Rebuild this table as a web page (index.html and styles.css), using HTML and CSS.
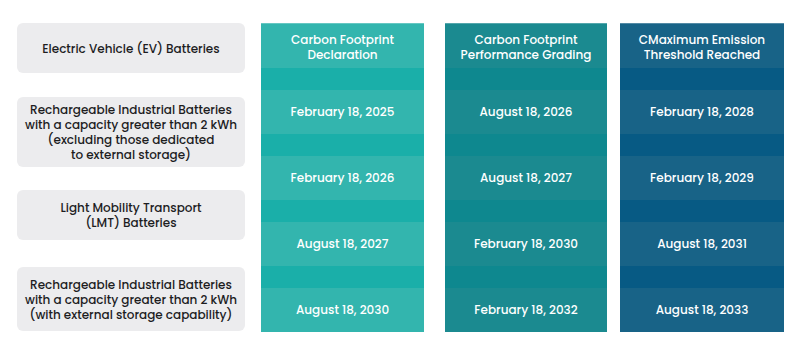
FILE: index.html
```html
<!DOCTYPE html>
<html>
<head>
<meta charset="utf-8">
<link rel="stylesheet" href="styles.css">
</head>
<body>
<div class="page">
  <div class="labels">
    <div class="label l1">Electric Vehicle (EV) Batteries</div>
    <div class="label l2">Rechargeable Industrial Batteries<br>with a capacity greater than 2 kWh<br>(excluding those dedicated<br>to external storage)</div>
    <div class="label l3">Light Mobility Transport<br>(LMT) Batteries</div>
    <div class="label l4">Rechargeable Industrial Batteries<br>with a capacity greater than 2 kWh<br>(with external storage capability)</div>
  </div>
  <div class="col c1">
    <div class="head">Carbon Footprint<br>Declaration</div>
    <div class="gap"></div><div class="cell">February 18, 2025</div>
    <div class="gap"></div><div class="cell">February 18, 2026</div>
    <div class="gap"></div><div class="cell">August 18, 2027</div>
    <div class="gap"></div><div class="cell">August 18, 2030</div>
  </div>
  <div class="col c2">
    <div class="head">Carbon Footprint<br>Performance Grading</div>
    <div class="gap"></div><div class="cell">August 18, 2026</div>
    <div class="gap"></div><div class="cell">August 18, 2027</div>
    <div class="gap"></div><div class="cell">February 18, 2030</div>
    <div class="gap"></div><div class="cell">February 18, 2032</div>
  </div>
  <div class="col c3">
    <div class="head">CMaximum Emission<br>Threshold Reached</div>
    <div class="gap"></div><div class="cell">February 18, 2028</div>
    <div class="gap"></div><div class="cell">February 18, 2029</div>
    <div class="gap"></div><div class="cell">August 18, 2031</div>
    <div class="gap"></div><div class="cell">August 18, 2033</div>
  </div>
</div>
</body>
</html>
```
FILE: styles.css
```css
html, body {
  margin: 0;
  padding: 0;
  background: #ffffff;
}
body {
  font-family: "Poppins", "Inter", "Noto Sans", sans-serif;
  font-weight: 500;
}
.page {
  display: flex;
  align-items: flex-start;
  padding: 23px 0 0 17px;
}
.labels {
  width: 228px;
  display: flex;
  flex-direction: column;
}
.label {
  background: #ececee;
  border-radius: 6px;
  color: #1d1d1f;
  font-size: 12px;
  line-height: 15px;
  text-align: center;
  display: flex;
  align-items: center;
  justify-content: center;
}
.l1 { height: 50px; }
.l2 { height: 70px; margin-top: 24px; }
.l3 { height: 50px; margin-top: 23px; }
.l4 { height: 64px; margin-top: 27px; }
.col {
  display: flex;
  flex-direction: column;
  color: #ffffff;
  text-align: center;
  font-size: 12px;
}
.c1 { width: 163px; margin-left: 16px; background: #33b5ae; }
.c2 { width: 162px; margin-left: 21px; background: #1b8a90; }
.c3 { width: 164px; margin-left: 13px; background: #186387; }
.head {
  height: 45px;
  line-height: 15px;
  display: flex;
  align-items: center;
  justify-content: center;
  padding-top: 2px;
  box-sizing: border-box;
  border-top: 1px solid rgba(255,255,255,0.25);
}
.gap { height: 22px; }
.cell {
  height: 44px;
  display: flex;
  align-items: center;
  justify-content: center;
}
.c1 .gap { background: #1aafa9; }
.c2 .gap { background: #0e888f; }
.c3 .gap { background: #075a84; }
```
